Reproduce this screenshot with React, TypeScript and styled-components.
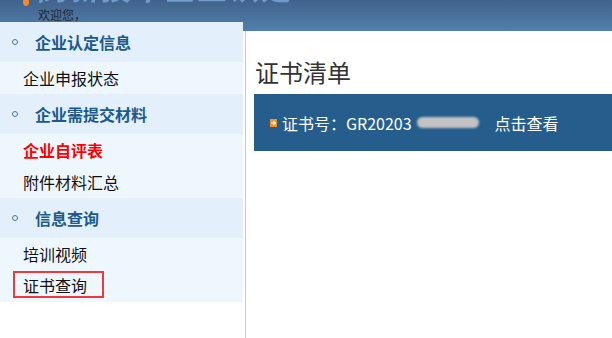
import React from "react";
import styled, { createGlobalStyle } from "styled-components";

const Global = createGlobalStyle`
  html, body { margin: 0; padding: 0; background: #fff; }
  body { font-family: "Noto Sans CJK SC", "Noto Sans", sans-serif; }
  * { box-sizing: border-box; }
`;

const Page = styled.div`
  width: 612px;
  height: 338px;
  overflow: hidden;
  display: flex;
  flex-direction: column;
`;

const Header = styled.header`
  height: 31px;
  flex: none;
  overflow: hidden;
  background: linear-gradient(to bottom, #41628c, #5180ac);
  display: flex;
  flex-direction: column;
`;

const LogoRow = styled.div`
  display: flex;
  align-items: flex-end;
  margin-top: -25px;
  padding-left: 23px;
  height: 31px;
  overflow: hidden;
`;

const LogoDot = styled.span`
  width: 6px;
  height: 9px;
  border-radius: 50%;
  background: #f58a2c;
  margin-right: 8px;
  flex: none;
`;

const LogoText = styled.span`
  font-size: 30px;
  line-height: 24px;
  height: 31px;
  font-weight: bold;
  font-style: italic;
  color: #78a6d6;
  letter-spacing: 2px;
  white-space: nowrap;
  filter: blur(0.6px);
  opacity: 0.85;
`;

const Welcome = styled.div`
  padding-left: 38px;
  margin-top: 2px;
  font-size: 12px;
  line-height: 14px;
  color: #1e2633;
`;

const Body = styled.div`
  flex: 1;
  display: flex;
  align-items: flex-start;
  min-height: 0;
`;

const Sidebar = styled.nav`
  width: 243px;
  flex: none;
  margin-top: -9px;
  background: #eff7fe;
  display: flex;
  flex-direction: column;
`;

const SectionHeader = styled.div`
  height: 40px;
  background: #e3f0fc;
  display: flex;
  align-items: center;
  padding-left: 12px;
  font-size: 16px;
  font-weight: bold;
  color: #1a5a8d;
`;

const Bullet = styled.span`
  width: 6px;
  height: 6px;
  border-radius: 50%;
  border: 1.5px solid #4a79a5;
  margin-right: 17px;
  flex: none;
`;

const Item = styled.div<{ $active?: boolean }>`
  height: 32px;
  display: flex;
  align-items: center;
  padding-left: 23px;
  font-size: 16px;
  color: ${(p) => (p.$active ? "#ff0000" : "#111")};
  font-weight: ${(p) => (p.$active ? "bold" : "normal")};
`;

const Selected = styled.span`
  border: 2px solid #f0393b;
  height: 27px;
  margin-left: -10px;
  margin-top: -3px;
  padding: 0 15px 0 8px;
  display: flex;
  align-items: center;
`;

const Divider = styled.div`
  width: 1px;
  align-self: stretch;
  margin-left: 2px;
  background: #c9c9c9;
  flex: none;
`;

const Main = styled.main`
  flex: 1;
  padding-left: 8px;
`;

const Title = styled.h1`
  margin: 25px 0 6px 1px;
  font-size: 24px;
  line-height: 32px;
  font-weight: normal;
  color: #333;
`;

const CertBar = styled.div`
  height: 57px;
  background: #255e8c;
  display: flex;
  align-items: center;
  padding-left: 16px;
  color: #fff;
  font-size: 16px;
  white-space: nowrap;
`;

const Arrow = styled.svg`
  margin-right: 5px;
  flex: none;
`;

const Redacted = styled.span`
  width: 62px;
  height: 11px;
  border-radius: 6px;
  background: #c3c3c3;
  margin-left: 5px;
  filter: blur(1px);
  flex: none;
`;

const ViewLink = styled.span`
  margin-left: 16px;
  cursor: pointer;
`;

export default function App() {
  return (
    <>
      <Global />
      <Page>
        <Header>
          <LogoRow>
            <LogoDot />
            <LogoText>高新技术企业认定</LogoText>
          </LogoRow>
          <Welcome>欢迎您，</Welcome>
        </Header>
        <Body>
          <Sidebar>
            <SectionHeader>
              <Bullet />
              企业认定信息
            </SectionHeader>
            <Item>企业申报状态</Item>
            <SectionHeader>
              <Bullet />
              企业需提交材料
            </SectionHeader>
            <Item $active>企业自评表</Item>
            <Item>附件材料汇总</Item>
            <SectionHeader>
              <Bullet />
              信息查询
            </SectionHeader>
            <Item>培训视频</Item>
            <Item>
              <Selected>证书查询</Selected>
            </Item>
          </Sidebar>
          <Divider />
          <Main>
            <Title>证书清单</Title>
            <CertBar>
              <Arrow width="7" height="8" viewBox="0 0 7 8">
                <rect x="0" y="0" width="7" height="8" fill="#f39028" />
                <path d="M1 4 H5 M3.5 2.3 L5.3 4 L3.5 5.7" stroke="#fff" strokeWidth="1.2" fill="none" />
              </Arrow>
              证书号：GR20203
              <Redacted />
              <ViewLink>点击查看</ViewLink>
            </CertBar>
          </Main>
        </Body>
      </Page>
    </>
  );
}
